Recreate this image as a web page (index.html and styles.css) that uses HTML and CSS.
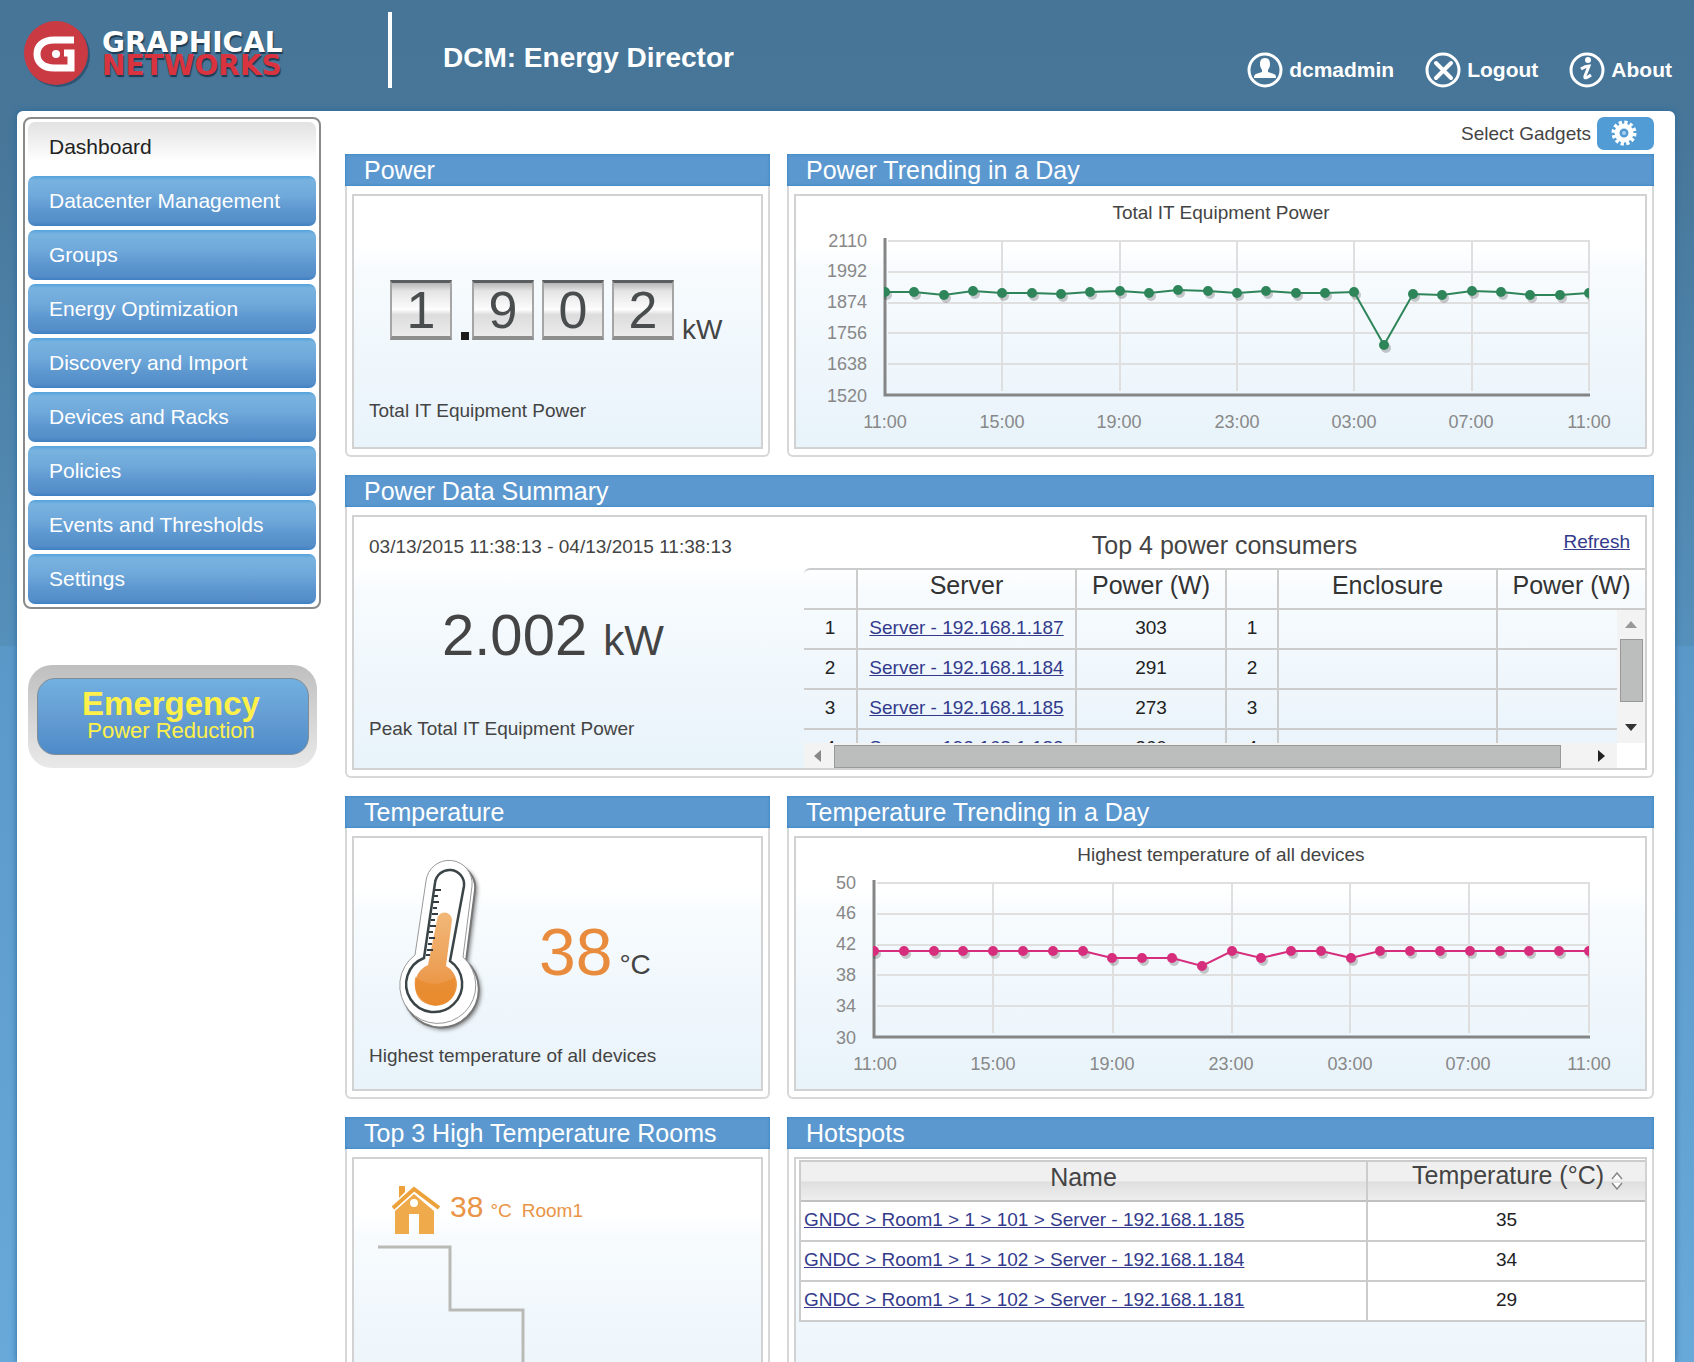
FILE: index.html
```html
<!DOCTYPE html>
<html lang="en">
<head>
<meta charset="utf-8">
<title>DCM: Energy Director</title>
<link rel="stylesheet" href="styles.css">
</head>
<body>
<div class="app">
  <header class="header">
    <a class="logo" href="#">
      <svg class="logo-mark" viewBox="0 0 68 66" aria-hidden="true">
        <circle cx="35" cy="34" r="32" fill="#1d3f5c" opacity=".6"/>
        <circle cx="33" cy="32" r="32" fill="#c93a43"/>
        <path d="M51 19H31C20 19 14 25 14 33S20 47 31 47H48V32H41" fill="none" stroke="#fff" stroke-width="7"/>
        <circle cx="33" cy="33" r="4" fill="#fff"/>
      </svg>
      <span class="logo-text"><span>GRAPHICAL</span><span class="logo-red">NETWORKS</span></span>
    </a>
    <h1 class="product">DCM: Energy Director</h1>
    <nav class="account">
      <a href="#"><svg viewBox="0 0 36 36" aria-hidden="true"><circle cx="18" cy="18" r="16" fill="none" stroke="#fff" stroke-width="3"/><path d="M18 6c4 0 5 3 5 6 0 3-1 4-2 6v2l6 2c2 1 2 2 2 4H7c0-2 0-3 2-4l6-2v-2c-1-2-2-3-2-6 0-3 1-6 5-6z" fill="#fff"/></svg>dcmadmin</a>
      <a href="#"><svg viewBox="0 0 36 36" aria-hidden="true"><circle cx="18" cy="18" r="16" fill="none" stroke="#fff" stroke-width="3"/><path d="M11 11l15 15M26 11L11 26" stroke="#fff" stroke-width="4" stroke-linecap="round"/></svg>Logout</a>
      <a href="#"><svg viewBox="0 0 36 36" aria-hidden="true"><circle cx="18" cy="18" r="16" fill="none" stroke="#fff" stroke-width="3"/><circle cx="19" cy="8" r="3" fill="#fff"/><path d="M12 17c3-2 5-3 8-3l-4 10c-1 3 2 2 6-1" fill="none" stroke="#fff" stroke-width="3"/></svg>About</a>
    </nav>
  </header>

  <div class="shell">
    <aside class="side">
      <nav class="menu">
        <a class="current" href="#">Dashboard</a>
        <a href="#">Datacenter Management</a>
        <a href="#">Groups</a>
        <a href="#">Energy Optimization</a>
        <a href="#">Discovery and Import</a>
        <a href="#">Devices and Racks</a>
        <a href="#">Policies</a>
        <a href="#">Events and Thresholds</a>
        <a href="#">Settings</a>
      </nav>
      <div class="emergency">
        <button type="button"><strong>Emergency</strong><span>Power Reduction</span></button>
      </div>
    </aside>

    <main class="main">
      <div class="toolbar">
        <label for="gadgets">Select Gadgets</label>
        <button id="gadgets" type="button" class="gear">
          <svg viewBox="0 0 26 26" aria-hidden="true"><circle cx="13" cy="13" r="10" fill="none" stroke="#fff" stroke-width="5" stroke-dasharray="3 2.236"/><circle cx="13" cy="13" r="7" fill="none" stroke="#fff" stroke-width="5"/><circle cx="13" cy="13" r="2" fill="#fff" opacity=".5"/></svg>
        </button>
      </div>

      <div class="grid">
        <section class="panel">
          <h2>Power</h2>
          <div class="box stat">
            <div class="meter">
              <span class="digit">1</span><span class="dot"></span><span class="digit">9</span><span class="digit">0</span><span class="digit">2</span><span class="unit">kW</span>
            </div>
            <p class="caption">Total IT Equipment Power</p>
          </div>
        </section>

        <section class="panel">
          <h2>Power Trending in a Day</h2>
          <div class="box">
            <svg class="chart" viewBox="0 0 849 251" role="img" aria-label="Total IT Equipment Power">
              <defs>
                <marker id="dotG" markerUnits="userSpaceOnUse" markerWidth="12" markerHeight="12" refX="6" refY="6"><circle cx="6" cy="6" r="5" fill="#2f855a"/></marker>
                <marker id="dotS" markerUnits="userSpaceOnUse" markerWidth="12" markerHeight="12" refX="6" refY="6"><circle cx="6" cy="6" r="5" fill="#000"/></marker>
                <clipPath id="plotA"><rect x="88" y="40" width="705" height="158"/></clipPath>
              </defs>
              <text class="chart-title" x="425" y="23">Total IT Equipment Power</text>
              <path class="gridline" d="M92 45H793M92 76H793M92 107H793M92 137H793M92 168H793M206 45V195M324 45V195M441 45V195M558 45V195M676 45V195M793 44V195"/>
              <path class="axis" d="M89 42V199H794"/>
              <g clip-path="url(#plotA)">
                <polyline class="shade" marker-start="url(#dotS)" marker-mid="url(#dotS)" marker-end="url(#dotS)" points="91,99 120,99 150,102 179,98 208,100 238,100 267,101 296,99 326,98 355,100 384,97 414,98 443,100 472,98 502,100 531,100 560,99 590,152 619,101 648,102 678,98 707,99 736,102 766,102 795,100"/>
                <polyline class="power-line" marker-start="url(#dotG)" marker-mid="url(#dotG)" marker-end="url(#dotG)" points="89,96 118,96 148,99 177,95 206,97 236,97 265,98 294,96 324,95 353,97 382,94 412,95 441,97 470,95 500,97 529,97 558,96 588,149 617,98 646,99 676,95 705,96 734,99 764,99 793,97"/>
              </g>
              <g class="ylab"><text x="71" y="51">2110</text><text x="71" y="81">1992</text><text x="71" y="112">1874</text><text x="71" y="143">1756</text><text x="71" y="174">1638</text><text x="71" y="206">1520</text></g>
              <g class="xlab"><text x="89" y="232">11:00</text><text x="206" y="232">15:00</text><text x="323" y="232">19:00</text><text x="441" y="232">23:00</text><text x="558" y="232">03:00</text><text x="675" y="232">07:00</text><text x="793" y="232">11:00</text></g>
            </svg>
          </div>
        </section>

        <section class="panel wide">
          <h2>Power Data Summary</h2>
          <div class="box summary">
            <div class="peak">
              <p>03/13/2015 11:38:13 - 04/13/2015 11:38:13</p>
              <p class="peak-value">2.002 <span>kW</span></p>
              <p>Peak Total IT Equipment Power</p>
            </div>
            <div class="consumers">
              <div class="consumers-head"><h3>Top 4 power consumers</h3><a href="#">Refresh</a></div>
              <table class="cells head">
                <colgroup><col class="c-no"><col class="c-name"><col class="c-val"><col class="c-no"><col class="c-name"><col></colgroup>
                <thead><tr><th></th><th>Server</th><th>Power (W)</th><th></th><th>Enclosure</th><th>Power (W)</th></tr></thead>
              </table>
              <div class="scroller">
                <div class="viewport">
                  <table class="cells">
                    <colgroup><col class="c-no"><col class="c-name"><col class="c-val"><col class="c-no"><col class="c-name"><col></colgroup>
                    <tbody>
                      <tr><td>1</td><td><a href="#">Server - 192.168.1.187</a></td><td>303</td><td>1</td><td></td><td></td></tr>
                      <tr><td>2</td><td><a href="#">Server - 192.168.1.184</a></td><td>291</td><td>2</td><td></td><td></td></tr>
                      <tr><td>3</td><td><a href="#">Server - 192.168.1.185</a></td><td>273</td><td>3</td><td></td><td></td></tr>
                      <tr><td>4</td><td><a href="#">Server - 192.168.1.183</a></td><td>260</td><td>4</td><td></td><td></td></tr>
                    </tbody>
                  </table>
                </div>
                <div class="vbar"><i class="up"></i><i class="thumb"></i><i class="down"></i></div>
                <div class="hbar"><i class="left"></i><i class="thumb"></i><i class="right"></i></div>
                <div class="corner"></div>
              </div>
            </div>
          </div>
        </section>

        <section class="panel">
          <h2>Temperature</h2>
          <div class="box stat">
            <div class="temp">
              <svg class="thermo" viewBox="0 0 96 176" aria-hidden="true">
                <defs>
                  <linearGradient id="fluid" x1="0" y1="0" x2="0" y2="1"><stop offset="0" stop-color="#f2b878"/><stop offset=".6" stop-color="#eda057"/><stop offset="1" stop-color="#e98a2e"/></linearGradient>
                  <filter id="soft" x="-20%" y="-20%" width="140%" height="140%"><feGaussianBlur stdDeviation="2"/></filter>
                </defs>
                <path d="M21 97L32 23A23 23 0 0 1 78 28L69 99A38 38 0 1 1 21 97Z" transform="translate(5 6)" fill="#555" opacity=".8" filter="url(#soft)"/>
                <path d="M21 97L32 23A23 23 0 0 1 78 28L69 99A38 38 0 1 1 21 97Z" transform="translate(3 4)" fill="#fff" stroke="#777" stroke-width="2"/>
                <path d="M21 97L32 23A23 23 0 0 1 78 28L69 99A38 38 0 1 1 21 97Z" fill="#fff" stroke="#999"/>
                <path d="M30 100L41 25A14 14 0 0 1 70 28L56 103A28 28 0 1 1 30 100Z" fill="#fff" stroke="#3b4447" stroke-width="2.500"/>
                <path d="M43 62A7 7 0 0 1 58 62L52 108A21 21 0 1 1 34 107Z" fill="url(#fluid)"/>
                <path d="M21 119Q40 133 61 119Q64 147 41 148Q18 146 21 119Z" fill="#e88a2c" opacity=".7"/>
                <path d="M41 32h6M40 38h4M39 44h6M39 50h4M38 56h6M37 62h4M36 68h6M35 74h4M35 80h6M34 86h4M33 92h6M32 97h4" stroke="#333c40" stroke-width="2"/>
              </svg>
              <span class="degrees">38</span><span class="degrees-unit">°C</span>
            </div>
            <p class="caption">Highest temperature of all devices</p>
          </div>
        </section>

        <section class="panel">
          <h2>Temperature Trending in a Day</h2>
          <div class="box">
            <svg class="chart" viewBox="0 0 849 251" role="img" aria-label="Highest temperature of all devices">
              <defs>
                <marker id="dotP" markerUnits="userSpaceOnUse" markerWidth="12" markerHeight="12" refX="6" refY="6"><circle cx="6" cy="6" r="5" fill="#d62e7c"/></marker>
                <clipPath id="plotB"><rect x="77" y="40" width="716" height="158"/></clipPath>
              </defs>
              <text class="chart-title" x="425" y="23">Highest temperature of all devices</text>
              <path class="gridline" d="M81 45H793M81 76H793M81 107H793M81 137H793M81 168H793M197 45V195M317 45V195M436 45V195M554 45V195M673 45V195M793 44V195"/>
              <path class="axis" d="M78 42V199H794"/>
              <g clip-path="url(#plotB)">
                <polyline class="shade" marker-start="url(#dotS)" marker-mid="url(#dotS)" marker-end="url(#dotS)" points="80,116 110,116 140,116 169,116 199,116 229,116 259,116 289,116 318,123 348,123 378,123 408,131 438,116 467,123 497,116 527,116 557,123 586,116 616,116 646,116 676,116 706,116 735,116 765,116 795,116"/>
                <polyline class="temp-line" marker-start="url(#dotP)" marker-mid="url(#dotP)" marker-end="url(#dotP)" points="78,113 108,113 138,113 167,113 197,113 227,113 257,113 287,113 316,120 346,120 376,120 406,128 436,113 465,120 495,113 525,113 555,120 584,113 614,113 644,113 674,113 704,113 733,113 763,113 793,113"/>
              </g>
              <g class="ylab"><text x="60" y="51">50</text><text x="60" y="81">46</text><text x="60" y="112">42</text><text x="60" y="143">38</text><text x="60" y="174">34</text><text x="60" y="206">30</text></g>
              <g class="xlab"><text x="79" y="232">11:00</text><text x="197" y="232">15:00</text><text x="316" y="232">19:00</text><text x="435" y="232">23:00</text><text x="554" y="232">03:00</text><text x="672" y="232">07:00</text><text x="793" y="232">11:00</text></g>
            </svg>
          </div>
        </section>

        <section class="panel">
          <h2>Top 3 High Temperature Rooms</h2>
          <div class="box rooms">
            <div class="room">
              <svg class="house" viewBox="0 0 48 48" aria-hidden="true">
                <path d="M7 0H13V6L7 12Z" fill="#eda13a"/>
                <path d="M1 22L22 3L47 22" fill="none" stroke="#eda13a" stroke-width="4"/>
                <path fill-rule="evenodd" d="M22 8L42 25V48H27V28H17V48H3V25ZM22 13a4 4 0 1 0 0 8a4 4 0 1 0 0-8Z" fill="#efaa4c"/>
              </svg>
              <span class="room-value">38</span><span>°C</span><span class="room-name">Room1</span>
            </div>
            <svg class="stairs" viewBox="0 0 382 180" aria-hidden="true"><path d="M0 2H72V65H145V128H218V180" fill="none" stroke="#b9b9b5" stroke-width="3"/></svg>
          </div>
        </section>

        <section class="panel">
          <h2>Hotspots</h2>
          <div class="box hot">
            <table class="hotspots">
              <colgroup><col><col class="c-temp"></colgroup>
              <thead><tr><th>Name</th><th>Temperature (°C) <svg class="sort" viewBox="0 0 12 18" aria-hidden="true"><path d="M1 7L6 1L11 7M1 11L6 17L11 11" fill="#fff" stroke="#888" stroke-width="1.500"/></svg></th></tr></thead>
              <tbody>
                <tr><td><a href="#">GNDC &gt; Room1 &gt; 1 &gt; 101 &gt; Server - 192.168.1.185</a></td><td>35</td></tr>
                <tr><td><a href="#">GNDC &gt; Room1 &gt; 1 &gt; 102 &gt; Server - 192.168.1.184</a></td><td>34</td></tr>
                <tr><td><a href="#">GNDC &gt; Room1 &gt; 1 &gt; 102 &gt; Server - 192.168.1.181</a></td><td>29</td></tr>
              </tbody>
            </table>
          </div>
        </section>
      </div>
    </main>
  </div>
</div>
</body>
</html>
```
FILE: styles.css
```css
* { box-sizing: border-box; }

body {
  margin: 0;
  font-family: "Liberation Sans", Arial, sans-serif;
  font-size: 19px;
  line-height: 22px;
  color: #444;
}

h1, h2, h3, p { margin: 0; font-weight: normal; }

a { color: #333a8c; }

button { font-family: inherit; cursor: pointer; }

.app {
  display: flex;
  flex-direction: column;
  height: 100vh;
  overflow: hidden;
  background: linear-gradient(#467597 0, #477699 140px, #5590bb 645px, #5a98c8 647px, #68a9da 1362px);
}

/* header */
.header {
  display: flex;
  align-items: center;
  flex: none;
  height: 111px;
  padding: 0 22px 0 23px;
  color: #fff;
}

.logo {
  display: flex;
  align-items: center;
  gap: 11px;
  width: 365px;
  margin-bottom: 4px;
  color: #fff;
  text-decoration: none;
}

.logo-mark { width: 68px; height: 66px; }

.logo-text {
  display: flex;
  flex-direction: column;
  font: bold 28px/23px "DejaVu Sans", sans-serif;
  text-shadow: 1px 2px 1px #1c3a52;
}

.logo-red { color: #d8333f; }

.product {
  display: flex;
  align-items: center;
  height: 76px;
  margin-bottom: 12px;
  padding: 16px 0 0 51px;
  border-left: 4px solid #fff;
  font-size: 28px;
  font-weight: bold;
}

.account {
  display: flex;
  gap: 31px;
  margin: 29px 0 0 auto;
}

.account a {
  display: flex;
  align-items: center;
  gap: 6px;
  color: #fff;
  font-size: 21px;
  font-weight: bold;
  text-decoration: none;
}

.account svg { width: 36px; height: 36px; }

/* page shell */
.shell {
  display: flex;
  flex: 1;
  gap: 24px;
  min-height: 0;
  margin: 0 19px 0 17px;
  padding: 6px 21px 0 6px;
  border-radius: 6px 6px 0 0;
  background: #fff;
  box-shadow: 0 0 6px #2a6a9c;
}

.side { flex: none; width: 298px; }

.menu {
  display: flex;
  flex-direction: column;
  gap: 4px;
  padding: 3px;
  border: 2px solid #8a8a8a;
  border-radius: 8px;
}

.menu a {
  height: 50px;
  padding-left: 21px;
  border-radius: 7px;
  background: linear-gradient(#53a2dc 0, #78b3e0 4px, #6fa8da 20px, #5d97cf 34px, #548dc8 46px, #3f80c2 50px);
  color: #fff;
  font-size: 21px;
  line-height: 50px;
  text-decoration: none;
}

.menu a.current {
  background: linear-gradient(#e2e2e2, #fff 80%);
  color: #222;
}

.emergency {
  margin: 56px 4px 0 5px;
  padding: 13px 8px 13px 9px;
  border-radius: 24px;
  background: linear-gradient(#bfbfbf, #e9e9e9);
}

.emergency button {
  display: flex;
  flex-direction: column;
  align-items: center;
  justify-content: center;
  width: 100%;
  height: 77px;
  padding: 0 4px 2px 0;
  border: 1px solid #7f8c96;
  border-radius: 18px;
  background: linear-gradient(#71b0e0, #659dd3 50%, #4d8bc8);
  color: #fff04a;
  font-size: 22px;
  line-height: 24px;
}

.emergency strong { font-size: 33px; line-height: 31px; }

/* dashboard */
.main { flex: 1; min-width: 0; }

.toolbar {
  display: flex;
  justify-content: flex-end;
  align-items: center;
  gap: 6px;
  margin-bottom: 4px;
}

.gear {
  display: grid;
  place-items: center;
  width: 57px;
  height: 33px;
  padding: 0 3px 2px 0;
  border: 0;
  border-radius: 7px;
  background: #529cd6;
}

.gear svg { width: 26px; height: 26px; }

.grid {
  display: grid;
  grid-template-columns: 425px minmax(0, 1fr);
  gap: 18px 17px;
}

.wide { grid-column: 1 / -1; }

.panel {
  display: flex;
  flex-direction: column;
  border: 2px solid #d8d8d8;
  border-top: 0;
  border-radius: 0 0 6px 6px;
  padding-bottom: 6px;
}

.panel h2 {
  margin: 0 -2px 8px;
  padding-left: 19px;
  background: #5b98cf;
  box-shadow: inset 0 0 3px #2f7cc0;
  color: #fff;
  font-size: 25px;
  line-height: 32px;
}

.box {
  flex: 1;
  min-height: 255px;
  margin: 0 5px;
  border: 2px solid #d2d2d2;
  background: linear-gradient(#fff 20%, #f7fbfe 30%, #e8f3fa);
}

.stat {
  display: flex;
  flex-direction: column;
  justify-content: space-between;
  padding: 0 15px 25px;
}

/* power meter */
.meter {
  display: flex;
  align-items: flex-end;
  gap: 8px;
  padding: 84px 0 0 21px;
}

.digit {
  width: 62px;
  height: 60px;
  border: 2px solid #a5a5a5;
  border-top: 3px solid #5a5e60;
  border-bottom: 4px solid #8e8e8e;
  background: linear-gradient(#b5b5b5, #e4e4e4 8px, #fdfdfd 50%, #dcdcdc 60%, #ececec);
  font-size: 52px;
  line-height: 54px;
  text-align: center;
  color: #4a4d4e;
}

.dot {
  width: 8px;
  height: 8px;
  margin: 0 -5px 0 1px;
  background: #1c1c1c;
}

.unit { font-size: 28px; line-height: 20px; }

/* charts */
.chart { display: block; width: 100%; }

.chart text { font-size: 18px; fill: #888; }

.chart .chart-title { font-size: 19px; fill: #444; text-anchor: middle; }

.ylab { text-anchor: end; }

.xlab { text-anchor: middle; }

.gridline { fill: none; stroke: #e0dfdf; stroke-width: 2; }

.axis { fill: none; stroke: #858585; stroke-width: 3; }

.shade { fill: none; stroke: none; opacity: .2; }

.power-line { fill: none; stroke: #2f855a; stroke-width: 2; }

.temp-line { fill: none; stroke: #d62e7c; stroke-width: 2; }

/* power summary */
.summary {
  display: grid;
  grid-template-columns: 450px minmax(0, 1fr);
}

.peak {
  display: flex;
  flex-direction: column;
  justify-content: space-between;
  padding: 19px 15px 28px;
}

.peak-value {
  padding-left: 73px;
  font-size: 58px;
  line-height: 60px;
}

.peak-value span { font-size: 42px; }

.consumers-head {
  display: grid;
  grid-template-columns: 1fr auto 1fr;
  height: 51px;
  padding-top: 17px;
}

.consumers-head h3 { grid-column: 2; font-size: 25px; }

.consumers-head a { justify-self: end; margin-right: 15px; line-height: 16px; }

.cells, .hotspots {
  width: 100%;
  table-layout: fixed;
  border-collapse: separate;
  border-spacing: 0;
}

.cells th, .cells td {
  height: 40px;
  padding: 0 0 2px;
  border-left: 2px solid #ccc;
  border-bottom: 2px solid #ccc;
  text-align: center;
  color: #222;
}

.cells th:first-child, .cells td:first-child { border-left: 0; }

.cells th {
  height: 42px;
  padding-bottom: 8px;
  border-top: 2px solid #ccc;
  color: #333;
  font-size: 25px;
  font-weight: normal;
  white-space: nowrap;
}

.cells th:first-child { border-top-left-radius: 6px; }

.c-no { width: 52px; }
.c-name { width: 219px; }
.c-val { width: 150px; }

.scroller {
  display: grid;
  grid-template: 133px 25px / minmax(0, 1fr) 28px;
}

.viewport { overflow: hidden; }

.vbar, .hbar {
  display: flex;
  align-items: center;
  justify-content: space-between;
  background: #f3f3f3;
}

.vbar { flex-direction: column; padding: 11px 0 12px; }

.hbar { padding: 1px 12px 0 10px; }

.corner { background: #fff; }

.thumb { background: #bcbebd; border: 1px solid #999; }

.vbar .thumb { width: 23px; height: 63px; margin-bottom: 12px; }

.hbar .thumb { flex: 1; height: 23px; margin: 0 37px 0 13px; }

.up, .down, .left, .right { border: 6px solid transparent; }

.up { border-top: 0; border-bottom: 7px solid #999; }
.down { border-bottom: 0; border-top: 7px solid #333; }
.left { border-left: 0; border-right: 7px solid #888; }
.right { border-right: 0; border-left: 7px solid #222; }

/* temperature */
.temp {
  display: flex;
  align-items: flex-end;
  padding: 20px 0 0 25px;
}

.thermo { width: 96px; height: 176px; }

.degrees {
  margin: 0 7px 0 49px;
  color: #e98b3d;
  font-size: 66px;
  line-height: 66px;
  padding-bottom: 49px;
}

.degrees-unit { padding-bottom: 55px; font-size: 28px; line-height: 28px; }

.temp + .caption { margin: -10px 0 -3px; }

/* rooms */
.rooms { padding: 27px 0 0 24px; }

.room {
  display: flex;
  align-items: baseline;
  color: #e99446;
}

.house {
  align-self: flex-start;
  width: 48px;
  height: 48px;
  margin: 0 10px 0 14px;
}

.room-value { margin-right: 7px; font-size: 30px; line-height: 42px; }

.room-name { margin-left: 10px; }

.stairs { display: block; width: 382px; margin-top: 11px; }

/* hotspots */
.hot { padding: 1px 0 0 3px; }

.hotspots { border-left: 2px solid #ccc; background: #fff; }

.hotspots th {
  height: 42px;
  padding: 0 0 9px;
  border-top: 2px solid #ccc;
  border-bottom: 2px solid #c0c0c0;
  background: linear-gradient(#f0f0f0 50%, #dfdfdf 52%, #eee);
  color: #444;
  font-size: 25px;
  font-weight: normal;
  white-space: nowrap;
}

.hotspots td {
  height: 40px;
  padding: 0 0 3px 3px;
  border-bottom: 2px solid #ccc;
  color: #222;
}

.hotspots th + th, .hotspots td + td { border-left: 2px solid #ccc; text-align: center; }

.hotspots th + th { padding-left: 22px; }

.hotspots td + td { padding-left: 0; }

.c-temp { width: 279px; }

.sort { width: 12px; height: 18px; vertical-align: -6px; }
```
